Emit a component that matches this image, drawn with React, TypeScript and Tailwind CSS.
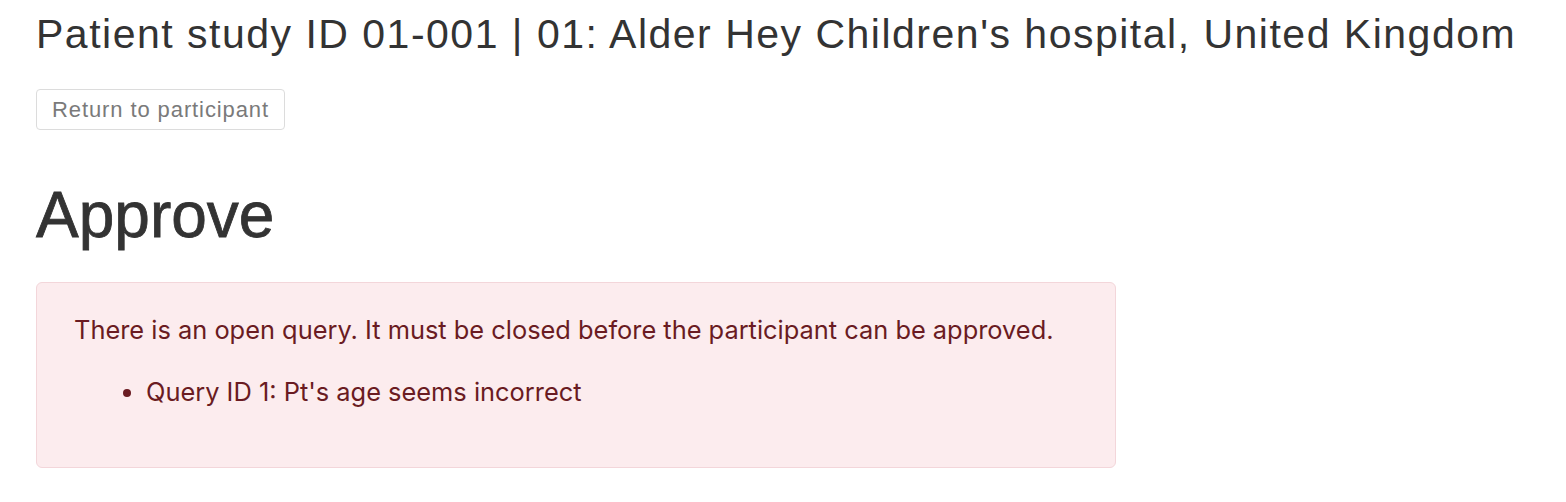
export default function App() {
  return (
    <div className="min-h-screen bg-white px-9 pt-[10px] text-[#333] font-['Liberation_Sans',Arial,sans-serif]">
      <h1 className="text-[41px] font-normal leading-[1.2] tracking-[1.5px]">
        Patient study ID 01-001 | 01: Alder Hey Children's hospital, United Kingdom
      </h1>
      <button className="mt-[30px] h-[41px] rounded border border-[#dcdcdc] bg-white px-[15px] text-[22px] tracking-[0.9px] text-[#7a7a7a]">
        Return to participant
      </button>
      <h2 className="mt-[47px] text-[64px] font-normal leading-[1.2] [-webkit-text-stroke:0.8px_#333]">Approve</h2>
      <div className="mt-[28px] w-[1080px] rounded-md border border-[#f3d6da] bg-[#fcecee] px-[37px] pt-[28px] pb-[56px] font-['Inter','Noto_Sans',sans-serif] text-[25.4px] text-[#6a1b22]">
        <p className="leading-[1.5]">There is an open query. It must be closed before the participant can be approved.</p>
        <ul className="mt-[24px] list-disc pl-[72px] leading-[1.5]">
          <li>Query ID 1: Pt's age seems incorrect</li>
        </ul>
      </div>
    </div>
  );
}
